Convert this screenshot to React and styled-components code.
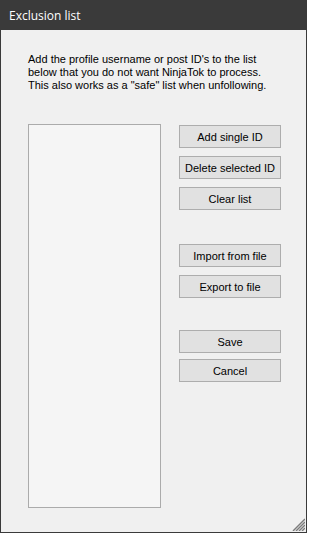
import React from "react";
import styled, { createGlobalStyle } from "styled-components";

const Global = createGlobalStyle`
  html, body { margin: 0; padding: 0; width: 307px; height: 533px; overflow: hidden; }
  body { font-family: "Liberation Sans", Arial, sans-serif; }
`;

const Window = styled.div`
  position: relative;
  box-sizing: border-box;
  width: 307px;
  height: 533px;
  border: 1px solid #3a3a3a;
  border-top: none;
  background: #f0f0f0;
  display: flex;
  flex-direction: column;
`;

const TitleBar = styled.div`
  height: 30px;
  margin: 0 -1px;
  background: #3a3a3a;
  color: #ffffff;
  font-family: "Open Sans", "Noto Sans", sans-serif;
  font-size: 12px;
  display: flex;
  align-items: center;
  padding-left: 9px;
  flex-shrink: 0;
`;

const Body = styled.div`
  flex: 1;
  display: flex;
  flex-direction: column;
  padding: 23px 0 0 27px;
`;

const Intro = styled.p`
  margin: 0;
  font-family: "Liberation Sans", Arial, sans-serif;
  font-size: 11px;
  line-height: 13px;
  color: #000;
  white-space: pre-line;
`;

const Row = styled.div`
  display: flex;
  margin-top: 32px;
  gap: 18px;
`;

const ListBox = styled.div`
  box-sizing: border-box;
  width: 133px;
  height: 384px;
  background: #f5f5f5;
  border: 1px solid #ababab;
`;

const Buttons = styled.div`
  display: flex;
  flex-direction: column;
  padding-top: 1px;
`;

const Button = styled.button`
  box-sizing: border-box;
  width: 102px;
  height: 23px;
  margin-top: ${(p) => p.$gap}px;
  background: #e1e1e1;
  border: 1px solid #adadad;
  border-radius: 0;
  padding: 0;
  font-family: "Liberation Sans", Arial, sans-serif;
  font-size: 11px;
  color: #000;
  text-align: center;
`;

const Grip = styled.svg`
  position: absolute;
  right: 1px;
  bottom: 1px;
`;

const buttons = [
  ["Add single ID", 0],
  ["Delete selected ID", 8],
  ["Clear list", 8],
  ["Import from file", 34],
  ["Export to file", 8],
  ["Save", 32],
  ["Cancel", 6],
];

export default function App() {
  return (
    <>
      <Global />
      <Window>
        <TitleBar>Exclusion list</TitleBar>
        <Body>
          <Intro>
            {" Add the profile username or post ID's to the list\nbelow that you do not want NinjaTok to process.\nThis also works as a \"safe\" list when unfollowing."}
          </Intro>
          <Row>
            <ListBox />
            <Buttons>
              {buttons.map(([label, gap]) => (
                <Button key={label} $gap={gap}>
                  {label}
                </Button>
              ))}
            </Buttons>
          </Row>
        </Body>
        <Grip width="13" height="13" viewBox="0 0 13 13">
          {[1, 4, 7, 10].map((o) => (
            <line
              key={o}
              x1={13}
              y1={o}
              x2={o}
              y2={13}
              stroke="#7c7c7c"
              strokeWidth="1.4"
            />
          ))}
        </Grip>
      </Window>
    </>
  );
}
